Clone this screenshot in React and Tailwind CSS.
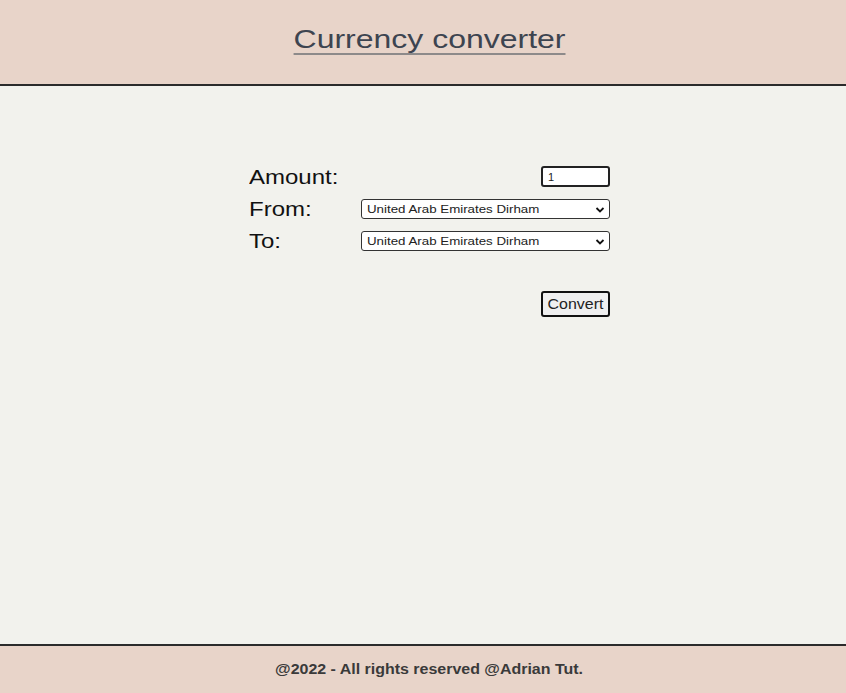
import { useState } from "react";

const currencies = [
  "United Arab Emirates Dirham",
  "Euro",
  "US Dollar",
  "British Pound",
  "Romanian Leu",
];

export default function App() {
  const [amount, setAmount] = useState("1");
  const [from, setFrom] = useState(currencies[0]);
  const [to, setTo] = useState(currencies[0]);

  return (
    <div className="flex flex-col h-[693px] bg-[#f2f2ed] font-['Liberation_Sans',Arial,sans-serif]">
      <header className="h-[86px] shrink-0 bg-[#e8d4c9] border-b-2 border-[#2b2b2b] flex justify-center pl-[13px]">
        <h1 className="mt-[22px] inline-block scale-x-[1.23] text-[26px] leading-[34px] text-[#3d4450] underline decoration-[#8d8a8a] decoration-2 underline-offset-[5px]">
          Currency converter
        </h1>
      </header>

      <main className="flex-1 flex justify-center pl-[13px]">
        <div className="w-[361px] mt-[79px]">
          <div className="flex items-center justify-between h-[23px]">
            <Label text="Amount:" />
            <input
              value={amount}
              onChange={(e) => setAmount(e.target.value)}
              className="w-[69px] h-[21px] border-2 border-[#222] rounded-[3px] bg-white px-[5px] text-[11px] text-[#222] outline-none"
            />
          </div>
          <div className="flex items-center h-[20px] mt-[11px]">
            <Label text="From:" />
            <Select value={from} onChange={setFrom} />
          </div>
          <div className="flex items-center h-[20px] mt-[12px]">
            <Label text="To:" />
            <Select value={to} onChange={setTo} />
          </div>
          <div className="flex justify-end mt-[40px]">
            <button className="w-[69px] h-[26px] border-2 border-[#111] rounded-[3px] bg-[#efefef] text-[14px] text-[#222]">
              <span className="inline-block scale-x-[1.14]">Convert</span>
            </button>
          </div>
        </div>
      </main>

      <footer className="h-[49px] shrink-0 bg-[#e8d4c9] border-t-2 border-[#2b2b2b] flex items-center justify-center pl-[13px]">
        <p className="inline-block scale-x-[1.14] text-[14px] font-bold text-[#3a3a3a]">@2022 - All rights reserved @Adrian Tut.</p>
      </footer>
    </div>
  );
}

function Label({ text }) {
  return (
    <label className="w-[112px] h-[20px] flex items-center text-[20px] leading-[20px] text-[#111]">
      <span className="block origin-left scale-x-[1.2]">{text}</span>
    </label>
  );
}

function Select({ value, onChange }) {
  return (
    <div className="relative w-[249px] h-[20px] shrink-0">
      <select
        value={value}
        onChange={(e) => onChange(e.target.value)}
        className="appearance-none block w-full h-[20px] border border-[#333] rounded-[3px] bg-white pl-[5px] text-[11px] text-transparent outline-none"
      >
        {currencies.map((c) => (
          <option key={c} className="text-[#222]">{c}</option>
        ))}
      </select>
      <span className="absolute inset-y-0 left-[6px] flex items-center origin-left scale-x-[1.21] text-[11px] text-[#222] pointer-events-none whitespace-nowrap">
        {value}
      </span>
      <svg className="absolute right-[5px] top-[7px] pointer-events-none" width="10" height="8" viewBox="0 0 10 8">
        <path d="M1.5 2 L5 5.5 L8.5 2" fill="none" stroke="#111" strokeWidth="1.8" />
      </svg>
    </div>
  );
}
